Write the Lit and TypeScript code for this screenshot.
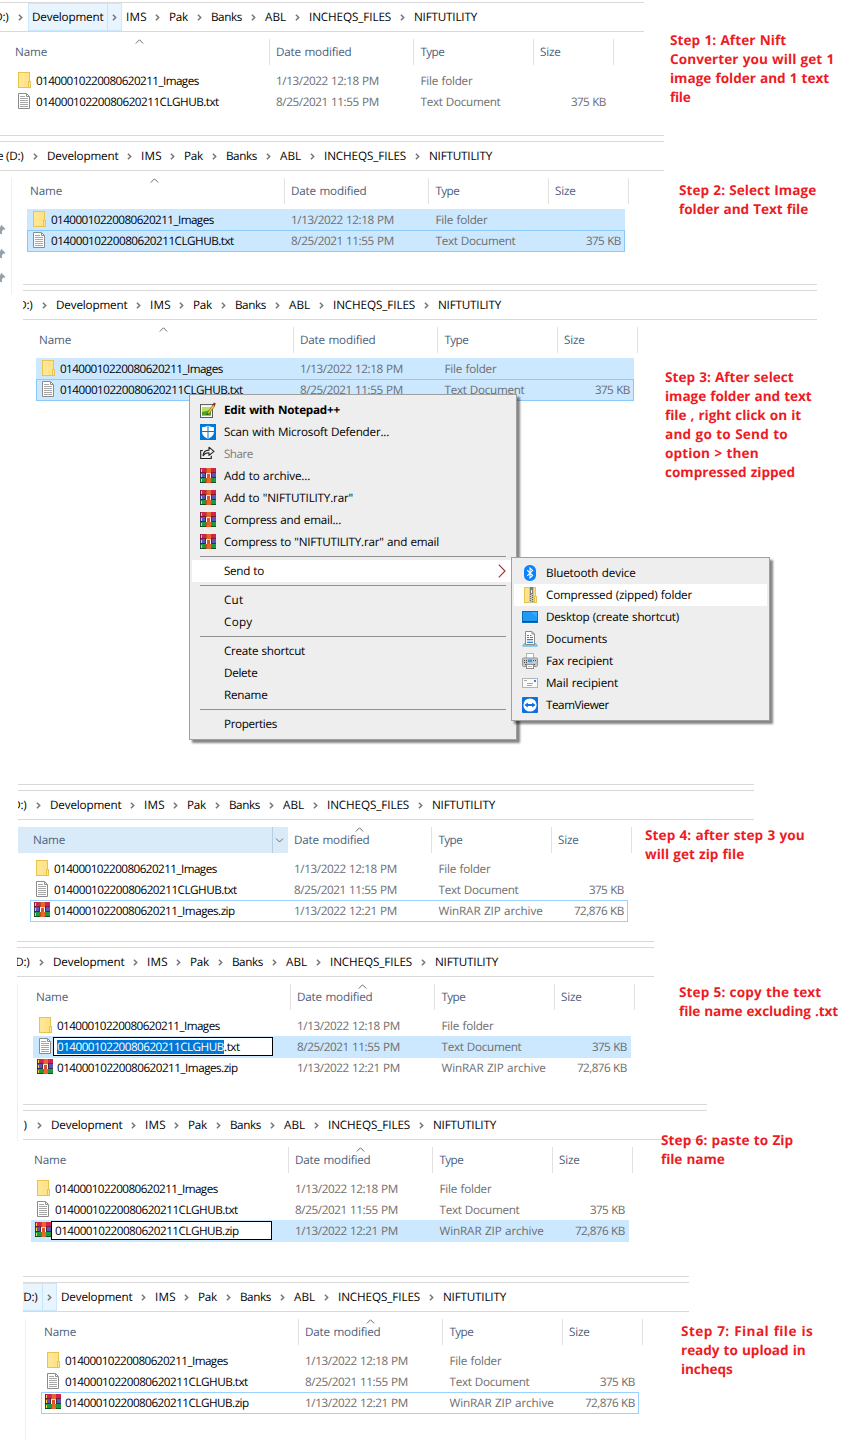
import { LitElement, html, css, nothing } from "lit";
import { customElement, property } from "lit/decorators.js";

/** One line of text whose tracking is tuned so that it spans `w` pixels. */
@customElement("fit-label")
class FitLabel extends LitElement {
  @property() text = "";
  @property({ type: Number }) w = 0;
  static styles = css`
    :host { display: block; white-space: pre; flex: none; }
    .ink { display: inline-block; white-space: pre; text-rendering: geometricPrecision; word-spacing: 0.6px; }
  `;
  firstUpdated() {
    const el = this.renderRoot.querySelector(".ink") as HTMLElement;
    const cs = getComputedStyle(el);
    const ctx = document.createElement("canvas").getContext("2d") as any;
    ctx.font = `${cs.fontWeight} ${cs.fontSize} ${cs.fontFamily}`;
    ctx.textRendering = "geometricPrecision";
    const spaces = this.text.split(" ").length - 1;
    const ink = ctx.measureText(this.text).width - 0.2 + spaces * 0.6;
    el.style.letterSpacing = `${(this.w - ink) / Math.max(1, this.text.length - 1)}px`;
    this.style.width = `${this.w}px`;
  }
  render() { return html`<span class="ink">${this.text}</span>`; }
}

const t = (text: string, w: number) => html`<fit-label .text=${text} .w=${w}></fit-label>`;

const icons: Record<string, any> = {
  folder: html`<svg width="13" height="16" viewBox="0 0 13 16" shape-rendering="crispEdges">
    <rect width="12" height="16" fill="#e8c44c"/><rect x="1" y="1" width="10" height="14" fill="#ffe38a"/>
    <rect x="1" y="1" width="5" height="14" fill="#ffe694"/>
    <rect x="10" y="9" width="3" height="7" fill="#e8c44c"/><rect x="11" y="10" width="1" height="5" fill="#ffe99f"/></svg>`,
  doc: html`<svg width="12" height="16" viewBox="0 0 12 16">
    <path d="M.5 .5H8.5L11.5 3.5V15.5H.5Z" fill="#fff" stroke="#8b8b8b"/>
    <path d="M8.5 1V3.5H11" fill="none" stroke="#8b8b8b"/>
    <path d="M2 3.5H7M2 5.5H10M2 7.5H10M2 9.5H10M2 11.5H10M2 13.5H10" stroke="#a6a6a6"/></svg>`,
  rar: html`<svg width="16" height="15" viewBox="0 0 16 15" shape-rendering="crispEdges">
    <rect width="16" height="5" fill="#cf2450"/><rect y="4" width="16" height="1" fill="#8a1436"/>
    <rect y="5" width="16" height="5" fill="#5c54bc"/><rect y="9" width="16" height="1" fill="#2d2a70"/>
    <rect y="10" width="16" height="5" fill="#1c9a3c"/><rect y="14" width="16" height="1" fill="#0c5420"/>
    <rect width="1" height="15" fill="#1d1a2c" fill-opacity=".5"/>
    <rect x="1" y="1" width="1" height="3" fill="#f2d13c"/><rect x="1" y="6" width="1" height="3" fill="#f2d13c"/><rect x="1" y="11" width="1" height="3" fill="#f2d13c"/>
    <rect x="6" width="5" height="15" fill="#e8662a"/><rect x="6" width="1" height="15" fill="#c44a1c"/>
    <rect x="5" y="5" width="7" height="5" fill="#4a2a4c"/>
    <rect x="6" y="5" width="5" height="1" fill="#e9dcd8"/><rect x="6" y="6" width="1" height="4" fill="#fff"/><rect x="10" y="6" width="1" height="4" fill="#fff"/>
    <rect x="7" y="6" width="3" height="4" fill="#d8542a"/></svg>`,
  npp: html`<svg width="16" height="16" viewBox="0 0 16 16">
    <rect x=".5" y="2.5" width="12" height="13" fill="#fbfbfb" stroke="#5b5b5b"/><rect x="2" y="5" width="9" height="8.5" fill="#b6e25a"/>
    <path d="M2 13.5V10L11 8V13.5Z" fill="#4f9e2c"/><path d="M1.5 2.7H12" stroke="#777" stroke-dasharray="1 1"/>
    <path d="M7 11.5L13 2.8L14.8 4L9 12Z" fill="#f0c23e" stroke="#6a4c16" stroke-width=".5"/><path d="M12.6 2.6L14 .6L15.8 1.6L14.8 4Z" fill="#9d2a25"/>
    <path d="M7 11.5L6.6 13.2L9 12Z" fill="#333"/></svg>`,
  defender: html`<svg width="16" height="16" viewBox="0 0 16 16"><rect width="16" height="16" fill="#0078d7"/>
    <path d="M8 1.3C9.8 2.8 11.8 3.2 14 3.2V7.5C14 11 11.5 13.3 8 14.9C4.5 13.3 2 11 2 7.5V3.2C4.2 3.2 6.2 2.8 8 1.3Z" fill="#fff"/>
    <path d="M8 1V15M1.5 7.5H14.5" stroke="#0078d7" stroke-width="1"/></svg>`,
  share: html`<svg width="16" height="16" viewBox="0 0 16 16" fill="none" stroke="#222" stroke-width="1.1">
    <path d="M2.8 4.5H.7V12.5H11.3V9.8"/><path d="M3 9.6C3.4 6 5.4 4.2 9 4.1V1.2L14 5.4L9 9.4V6.7C6.4 6.6 4.6 7.4 3 9.6Z" stroke-linejoin="round"/></svg>`,
  bluetooth: html`<svg width="16" height="16" viewBox="0 0 16 16"><rect x="2" width="12" height="16" rx="5.6" fill="#0a82ff"/>
    <path d="M5.2 5.2L10.6 10.6L8 13V3L10.6 5.4L5.2 10.8" fill="none" stroke="#fff" stroke-width="1.1"/></svg>`,
  zipped: html`<svg width="16" height="16" viewBox="0 0 16 16" shape-rendering="crispEdges">
    <rect x="2" width="12" height="16" fill="#e8c44c"/><rect x="3" y="1" width="10" height="14" fill="#ffe38a"/>
    <rect x="12" y="9" width="3" height="7" fill="#e8c44c"/><rect x="13" y="10" width="1" height="5" fill="#ffe99f"/>
    <rect x="7" width="5" height="16" fill="#c4c4ba"/>
    <path d="M8 7.5H9M10 8.5H11M8 9.5H9M10 10.5H11M8 11.5H9M10 12.5H11M8 13.5H9M10 14.5H11" stroke="#666"/>
    <rect x="8" width="3" height="7" fill="#7d7d7d"/><rect x="9" y="3" width="1" height="3" fill="#f4f4f4"/></svg>`,
  desktop: html`<svg width="16" height="16" viewBox="0 0 16 16" shape-rendering="crispEdges">
    <rect y="2" width="16" height="12" fill="#0b6cb8"/><rect x="1" y="3" width="14" height="10" fill="#1e9bf5"/>
    <path d="M9 3H15V9Z" fill="#36aaff" shape-rendering="auto"/><rect x="1" y="12" width="14" height="1" fill="#0a4f8c"/></svg>`,
  documents: html`<svg width="16" height="16" viewBox="0 0 16 16">
    <path d="M.5 15.2L2 12.5H14L15.5 15.2Z" fill="#7fd0ee" stroke="#4aa9cf" stroke-width=".6"/>
    <path d="M3.5 .5H10L12.5 3V13.5H3.5Z" fill="#fff" stroke="#8b8b8b"/><path d="M10 .8V3H12.3" fill="none" stroke="#8b8b8b"/>
    <path d="M5 4.5H7M5 6.5H7M8 4.5H9.5M8 6.5H11M5 8.5H11M5 11.5H11" stroke="#2a86cf"/><path d="M5 10H11" stroke="#9fb6c8"/></svg>`,
  fax: html`<svg width="16" height="16" viewBox="0 0 16 16">
    <rect x="4.5" y=".5" width="7" height="5" fill="#fff" stroke="#b5b5b5"/><rect x=".5" y="5" width="15" height="8.5" rx="1" fill="#c3c8cd" stroke="#8f969c"/>
    <path d="M2 7.5H5M2 9.5H5M11 7.5H14" stroke="#444" stroke-dasharray="1 1"/>
    <rect x="6" y="6.5" width="4" height="2.6" fill="#2a9df4"/><path d="M3 11.5H13" stroke="#4a5055"/>
    <rect x="4.5" y="11.5" width="7" height="4" fill="#fff" stroke="#8d8d8d"/><path d="M6 13.5H10" stroke="#bbb"/></svg>`,
  mail: html`<svg width="16" height="16" viewBox="0 0 16 16" shape-rendering="crispEdges"><rect x=".5" y="3.5" width="15" height="9" fill="#fafafa" stroke="#b4b4b4"/>
    <path d="M2 5.5H5M5 8.5H11M5 10.5H10" stroke="#a8a8a8"/><rect x="12" y="5" width="2" height="2" fill="#2a86f0"/></svg>`,
  teamviewer: html`<svg width="16" height="16" viewBox="0 0 16 16"><rect width="16" height="16" rx="1" fill="#0e6fe0"/>
    <circle cx="8" cy="8" r="6.6" fill="#fff"/><path d="M2.4 8L5.8 5.4V7.1H10.2V5.4L13.6 8L10.2 10.6V8.9H5.8V10.6Z" fill="#0e6fe0"/></svg>`,
  pin: html`<svg width="12" height="12" viewBox="0 0 12 12"><path d="M7.5 1L11.5 5L10.3 5.8L9.4 5.6L7.8 7.4L8 9.6L7 10.6L4.4 8.2L.5 11.8L3.4 7.2L1 5L2 4L4.6 4.4L6.6 2.8L6.6 1.8Z" fill="#939fa9"/></svg>`,
};

const chevron = html`<svg width="5" height="7" viewBox="0 0 5 7"><path d="M.9 .7L3.7 3.5L.9 6.3" fill="none" stroke="#767676" stroke-width="1.5"/></svg>`;
const caret = (d: string) => html`<svg width="9" height="5" viewBox="0 0 9 5"><path d=${d} fill="none" stroke="#6b6b6b" stroke-width="1"/></svg>`;

interface Row { icon: string; name: [string, number]; date: [string, number]; type: [string, number]; size?: [string, number]; state?: string; edit?: string; sel?: boolean }
interface Step {
  left: number; right: number; off: number; height: number; noteX: number; noteY: number; note: [string, number][];
  rows: Row[]; sort: number; first?: boolean; nav?: string; hot?: string; nameHot?: boolean; menu?: boolean; lead?: [string, number][];
}

const images = (state = ""): Row => ({ icon: "folder", name: ["01400010220080620211_Images", 163], date: ["1/13/2022 12:18 PM", 103], type: ["File folder", 52], state });
const txt = (state = "", extra = {}): Row => ({ icon: "doc", name: ["01400010220080620211CLGHUB.txt", 183], date: ["8/25/2021 11:55 PM", 103], type: ["Text Document", 80], size: ["375 KB", 35], state, ...extra });
const zip = (name: string, w: number, state = "", extra = {}): Row => ({ icon: "rar", name: [name, w], date: ["1/13/2022 12:21 PM", 103], type: ["WinRAR ZIP archive", 104], size: ["72,876 KB", 50], state, ...extra });

const steps: Step[] = [
  { left: 0, right: 644, off: 0, height: 133, noteX: 670, noteY: 28, sort: 135, first: true, hot: "dev",
    note: [["Step 1: After Nift", 116], ["Converter you will get 1", 164], ["image folder and 1 text", 159], ["file", 20.5]],
    rows: [images(), txt()] },
  { left: 0, right: 664, off: 15, height: 149, noteX: 679, noteY: 45, sort: 135, nav: "pins", lead: [["e", 6], ["(D:)", 17.5]],
    note: [["Step 2: Select Image", 137], ["folder and Text file", 129]],
    rows: [images("on"), txt("on focus")] },
  { left: 23, right: 817, off: 24, height: 500, noteX: 665, noteY: 83, sort: 135, menu: true,
    note: [["Step 3: After select", 128.5], ["image folder and text", 146.5], ["file , right click on it", 136], ["and go to Send to", 122.5], ["option > then", 93.5], ["compressed zipped", 130]],
    rows: [images("on"), txt("on focus")] },
  { left: 18, right: 754, off: 18, height: 157, noteX: 645, noteY: 41, sort: 337, nameHot: true,
    note: [["Step 4: after step 3 you", 159.5], ["will get zip file", 99]],
    rows: [images(), txt(), zip("01400010220080620211_Images.zip", 181, "focus")] },
  { left: 17, right: 654, off: 21, height: 163, noteX: 679, noteY: 41, sort: 337, nav: "line5",
    note: [["Step 5: copy the text", 142], ["file name excluding .txt", 159]],
    rows: [images(), txt("on", { edit: "narrow", sel: true }), zip("01400010220080620211_Images.zip", 181)] },
  { left: 23, right: 707, off: 19, height: 172, noteX: 661, noteY: 26, sort: 337, lead: [[")", 4]],
    note: [["Step 6: paste to Zip", 132], ["file name", 63.5]],
    rows: [images(), txt(), zip("01400010220080620211CLGHUB.zip", 184, "on", { edit: "wide" })] },
  { left: 23, right: 689, off: 29, height: 164, noteX: 681, noteY: 45, sort: 337, nav: "line7", hot: "root",
    note: [["Step 7: Final file is", 131.5], ["ready to upload in", 124.5], ["incheqs", 51.5]],
    rows: [images(), txt(), zip("01400010220080620211CLGHUB.zip", 184, "focus")] },
];

const crumbs: [string, number][] = [["Development", 71.5], ["IMS", 20.5], ["Pak", 19], ["Banks", 31], ["ABL", 21], ["INCHEQS_FILES", 82], ["NIFTUTILITY", 63]];

@customElement("explorer-panel")
class ExplorerPanel extends LitElement {
  @property({ attribute: false }) step!: Step;
  static styles = css`
    :host { display: block; overflow-x: clip; position: relative; color: #000; }
    .rule { height: 1px; background: #d9d9d9; }
    .gap { height: 5px; }
    .path { display: flex; height: 28px; line-height: 27px; width: 700px; position: relative; }
    .drive { display: flex; justify-content: flex-end; gap: 3px; width: 40px; margin-left: -31.5px; flex: none; position: relative; }
    .crumb { flex: none; position: relative; }
    .sep { width: 23px; flex: none; display: flex; align-items: center; padding-left: 9px; box-sizing: border-box; position: relative; }
    .drive + .sep { width: 23.5px; }
    .hot { position: absolute; top: 0; height: 28px; background: #e8f5ff; box-shadow: inset 0 0 0 1px #cce8ff; box-sizing: border-box; }
    .hot.dev { left: 28px; width: 94px; }
    .hot.root { left: -7px; width: 35px; }
    .hot::after { content: ""; position: absolute; top: 0; bottom: 0; width: 1px; background: #c4e5fc; }
    .hot.dev::after { left: 79px; }
    .hot.root::after { left: 20px; }
    .table { width: 640px; padding-top: 7px; }
    .head { display: grid; grid-template-columns: 270px 144px 120px 80px; height: 25px; line-height: 25px; color: #4c607a; position: relative; }
    .cell { border-right: 1px solid #e2e2e2; padding-left: 6px; }
    .cell.name { padding-left: 15px; }
    .cell.type { padding-left: 6.5px; }
    .cell.over { background: #d9ebf9; border-color: #d9ebf9; display: flex; justify-content: space-between; }
    .drop { width: 15px; border-left: 1px solid #b4cfe2; display: flex; align-items: center; padding-left: 2px; box-sizing: border-box; }
    .sort { position: absolute; top: 0; line-height: 0; }
    .rows { padding: 6px 0 0 12px; }
    .row { display: grid; grid-template-columns: 264px 144.5px 185.5px; width: 598px; height: 22px; margin-bottom: -1px; line-height: 21px; color: #6d6d6d; position: relative; }
    .on { background: #cce8ff; }
    .focus { box-shadow: inset 0 0 0 1px #99d1ff; }
    .on.focus { box-shadow: inset 0 0 0 1px #8cc9fb; }
    .file { display: flex; padding-left: 6px; color: #000; }
    .icon { width: 18px; padding-top: 2px; line-height: 0; flex: none; position: relative; }
    .icon.rar { margin-left: -2px; width: 20px; }
    .kind { display: flex; justify-content: space-between; }
    .edit { display: flex; height: 19px; margin: 1px 0 0 -4px; padding-left: 3px; width: 221px; box-sizing: border-box; border: 1px solid #000; background: #fff; line-height: 17px; position: relative; }
    .edit.narrow { width: 220px; }
    .sel { background: #0078d7; color: #fff; height: 14px; line-height: 13px; margin-top: 2px; }
    .nav { position: absolute; }
    .line { width: 1px; background: #f0f0f0; }
    .pins { top: 43px; left: 0; height: 116px; width: 12px; border-right: 1px solid #f0f0f0; box-sizing: border-box; padding-top: 46px; display: grid; grid-auto-rows: 24px; overflow: hidden; }
    .pins svg { margin-left: -6px; }
    .line5 { left: 0; top: 43px; height: 157px; }
    .line7 { left: 2px; top: 43px; height: 125px; }
  `;
  render() {
    const s = this.step;
    const shift = s.off - s.left;
    const lead: [string, number][] = s.lead ?? [["(D:)", 17.5]];
    return html`
      ${s.first ? nothing : html`<div class="rule"></div><div class="gap"></div>`}
      <div class="rule"></div>
      <div class="path" style="margin-left:${shift}px">
        ${s.hot ? html`<i class="hot ${s.hot}"></i>` : nothing}
        <span class="drive">${lead.map(([a, w]) => t(a, w))}</span>
        <span class="sep">${chevron}</span>
        ${crumbs.map(([name, w], i) => html`<span class="crumb" style="width:${Math.floor(w)}px">${t(name, w)}</span>${i < crumbs.length - 1 ? html`<span class="sep">${chevron}</span>` : nothing}`)}
      </div>
      <div class="rule"></div>
      <div class="table" style="margin-left:${shift}px">
        <div class="head">
          <div class="cell name ${s.nameHot ? "over" : ""}">${t("Name", 32)}
            ${s.nameHot ? html`<span class="drop">${caret("M1 .5L4.5 4L8 .5")}</span>` : nothing}</div>
          <div class="cell">${t("Date modified", 75.5)}</div>
          <div class="cell type">${t("Type", 24)}</div>
          <div class="cell">${t("Size", 20.5)}</div>
          <span class="sort" style="left:${s.sort}px">${caret("M.8 4.5L4.5 .8L8.2 4.5")}</span>
        </div>
        <div class="rows">${s.rows.map((r) => this.row(r))}</div>
      </div>
      ${s.nav === "pins" ? html`<div class="nav pins">${icons.pin}${icons.pin}${icons.pin}</div>` : s.nav ? html`<div class="nav line ${s.nav}"></div>` : nothing}
    `;
  }
  row(r: Row) {
    const name = r.sel
      ? html`<span class="sel">${t("01400010220080620211CLGHUB", 167)}</span>${t(".txt", 16)}`
      : t(...r.name);
    return html`<div class="row ${r.state}">
      <div class="file"><span class="icon ${r.icon}">${icons[r.icon]}</span>${r.edit ? html`<span class="edit ${r.edit}">${name}</span>` : name}</div>
      <div>${t(...r.date)}</div>
      <div class="kind">${t(...r.type)}${r.size ? t(...r.size) : nothing}</div>
    </div>`;
  }
}

type Item = { text: string; w: number; icon?: string; cls?: string } | null;
const mainMenu: Item[] = [
  { text: "Edit with Notepad++", w: 116, icon: "npp", cls: "bold" },
  { text: "Scan with Microsoft Defender...", w: 165, icon: "defender" },
  { text: "Share", w: 29, icon: "share", cls: "off" },
  { text: "Add to archive...", w: 86, icon: "rar" },
  { text: 'Add to "NIFTUTILITY.rar"', w: 129, icon: "rar" },
  { text: "Compress and email...", w: 117, icon: "rar" },
  { text: 'Compress to "NIFTUTILITY.rar" and email', w: 215, icon: "rar" },
  null,
  { text: "Send to", w: 40, cls: "hover sub" },
  null,
  { text: "Cut", w: 19 }, { text: "Copy", w: 28 },
  null,
  { text: "Create shortcut", w: 81 }, { text: "Delete", w: 33.5 }, { text: "Rename", w: 43.5 },
  null,
  { text: "Properties", w: 53 },
];
const sendMenu: Item[] = [
  { text: "Bluetooth device", w: 89.5, icon: "bluetooth" },
  { text: "Compressed (zipped) folder", w: 146, icon: "zipped", cls: "hover" },
  { text: "Desktop (create shortcut)", w: 133, icon: "desktop" },
  { text: "Documents", w: 61, icon: "documents" },
  { text: "Fax recipient", w: 67, icon: "fax" },
  { text: "Mail recipient", w: 72, icon: "mail" },
  { text: "TeamViewer", w: 63, icon: "teamviewer" },
];

@customElement("popup-menu")
class PopupMenu extends LitElement {
  @property({ attribute: false }) items: Item[] = [];
  static styles = css`
    :host { display: block; box-sizing: border-box; background: #eeeeee; border: 1px solid #a0a0a0; padding: 4px 2px; color: #000; box-shadow: 3px 3px 2px rgba(0,0,0,.48); }
    .item { display: flex; height: 22px; line-height: 21px; padding-left: 8px; position: relative; }
    .icon { width: 24px; padding-top: 3px; line-height: 0; flex: none; }
    .bold { font-weight: 700; }
    .off { color: #7a7a7a; }
    .hover { background: #fff; }
    .arrow { margin: 4px 0 0 auto; padding-right: 8px; line-height: 0; }
    .divider { height: 7px; padding: 3px 8px; box-sizing: border-box; }
    .divider i { display: block; height: 1px; background: #919191; }
  `;
  render() {
    return this.items.map((it) => it === null
      ? html`<div class="divider"><i></i></div>`
      : html`<div class="item ${it.cls ?? ""}"><span class="icon">${it.icon ? icons[it.icon] : nothing}</span>${t(it.text, it.w)}
          ${it.cls?.includes("sub") ? html`<span class="arrow"><svg width="8" height="14" viewBox="0 0 8 14"><path d="M.8 .7L7 7L.8 13.3" fill="none" stroke="#a03a34" stroke-width="1.2"/></svg></span>` : nothing}</div>`);
  }
}

@customElement("app-root")
class AppRoot extends LitElement {
  static styles = css`
    :host { display: block; height: 1440px; overflow: hidden; background: #fff; padding-top: 2px; box-sizing: border-box; font-family: "Open Sans", "Noto Sans", sans-serif; font-size: 11.7px; }
    .step { display: grid; position: relative; }
    explorer-panel, .note { grid-area: 1 / 1; }
    .note { z-index: 1; color: #ed1c24; font-size: 13.6px; font-weight: 700; line-height: 19px; }
    popup-menu { position: absolute; z-index: 2; }
    .main { left: 189px; top: 110px; width: 328px; }
    .send { left: 511px; top: 273px; width: 259px; }
  `;
  render() {
    return steps.map((s) => html`<section class="step" style="height:${s.height}px">
      <explorer-panel .step=${s} style="margin-left:${s.left}px;width:${s.right - s.left}px"></explorer-panel>
      <div class="note" style="margin-left:${s.noteX}px;padding-top:${s.noteY}px">${s.note.map(([a, w]) => t(a, w))}</div>
      ${s.menu ? html`<popup-menu class="main" .items=${mainMenu}></popup-menu><popup-menu class="send" .items=${sendMenu}></popup-menu>` : nothing}
    </section>`);
  }
}
